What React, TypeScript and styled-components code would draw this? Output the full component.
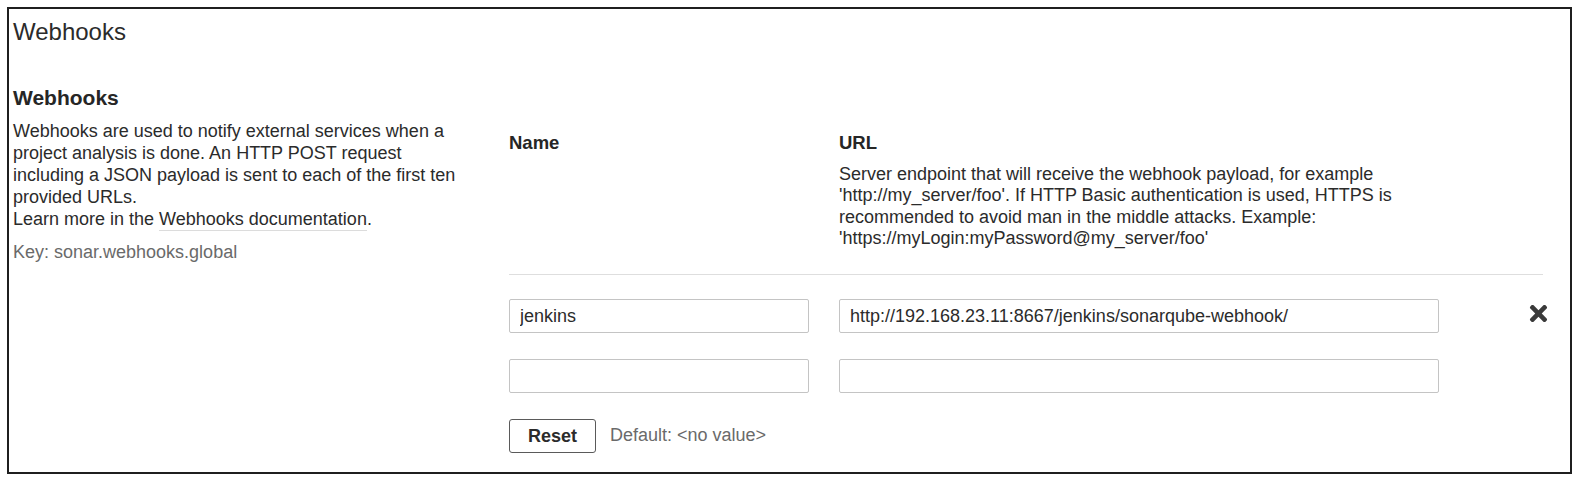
import React from "react";
import styled, { createGlobalStyle } from "styled-components";
import { FaTimes } from "react-icons/fa";

const GlobalStyle = createGlobalStyle`
  html, body {
    margin: 0;
    padding: 0;
    background: #ffffff;
  }
  body {
    font-family: "Liberation Sans", Arial, Helvetica, sans-serif;
    color: #2b2b2b;
  }
  * { box-sizing: border-box; }
`;

const Frame = styled.div`
  margin: 7px 2px 0 7px;
  height: 467px;
  border: 2px solid #1f1f1f;
  padding: 8px 0 0 4px;
  background: #fff;
`;

const PageTitle = styled.h1`
  margin: 0;
  font-size: 24px;
  line-height: 30px;
  font-weight: 400;
  color: #2b2b2b;
`;

const SectionTitle = styled.h3`
  margin: 38px 0 0;
  font-size: 21px;
  line-height: 26px;
  font-weight: 700;
  color: #262626;
`;

const Definition = styled.div`
  display: flex;
  align-items: flex-start;
`;

const Left = styled.div`
  width: 455px;
  flex: none;
  padding-top: 9px;
  font-size: 18px;
  line-height: 22px;
`;

const Description = styled.div`
  color: #2b2b2b;
`;

const DocLink = styled.a`
  color: #2b2b2b;
  text-decoration: none;
  border-bottom: 1px solid #dcdcdc;
  padding-bottom: 1px;
`;

const Key = styled.div`
  margin-top: 11px;
  color: #6a6a6a;
`;

const Right = styled.div`
  margin-left: 41px;
  padding-top: 21px;
  width: 1038px;
  font-size: 18px;
  line-height: 21.5px;
`;

const Grid = styled.div`
  display: grid;
  grid-template-columns: 300px 600px 1fr;
  column-gap: 30px;
`;

const HeadCell = styled.div`
  padding-bottom: 24.5px;
`;

const HeadLabel = styled.div`
  font-weight: 700;
  font-size: 18.5px;
  color: #262626;
`;

const HeadHelp = styled.div`
  margin-top: 10px;
  color: #2b2b2b;
`;

const Divider = styled.div`
  grid-column: 1 / -1;
  height: 1px;
  margin-right: 4px;
  background: #dedede;
  margin-bottom: 24px;
`;

const Field = styled.input<{ $last?: boolean }>`
  display: block;
  width: 100%;
  height: 34px;
  margin-bottom: ${(p) => (p.$last ? "0" : "26px")};
  padding: 0 10px;
  border: 1px solid #c4c4c4;
  border-radius: 2px;
  font-family: "Liberation Sans", Arial, sans-serif;
  font-size: 18px;
  color: #2b2b2b;
  background: #fff;
  outline: none;
`;

const ActionCell = styled.div`
  display: flex;
  justify-content: flex-end;
  height: 34px;
  align-items: center;
`;

const DeleteButton = styled.button`
  display: flex;
  align-items: center;
  justify-content: center;
  width: 17px;
  height: 17px;
  margin-top: -5px;
  padding: 0;
  border: none;
  background: none;
  color: #3a3a3a;
  cursor: pointer;
  svg {
    width: 25px;
    height: 25px;
    flex: none;
  }
`;

const Footer = styled.div`
  display: flex;
  align-items: center;
  gap: 14px;
  margin-top: 26px;
`;

const ResetButton = styled.button`
  width: 87px;
  height: 34px;
  border: 1px solid #5a5a5a;
  border-radius: 3px;
  background: #fff;
  font-family: "Liberation Sans", Arial, sans-serif;
  font-size: 18px;
  font-weight: 700;
  color: #2b2b2b;
  padding: 0;
  cursor: pointer;
`;

const DefaultText = styled.span`
  color: #6a6a6a;
  font-size: 18px;
`;

type Hook = { name: string; url: string };

const hooks: Hook[] = [
  { name: "jenkins", url: "http://192.168.23.11:8667/jenkins/sonarqube-webhook/" },
  { name: "", url: "" },
];

export default function App() {
  return (
    <>
      <GlobalStyle />
      <Frame>
        <PageTitle>Webhooks</PageTitle>
        <SectionTitle>Webhooks</SectionTitle>
        <Definition>
          <Left>
            <Description>
              Webhooks are used to notify external services when a project analysis is done. An HTTP POST
              request including a JSON payload is sent to each of the first ten provided URLs.
              <br />
              Learn more in the <DocLink href="#">Webhooks documentation</DocLink>.
            </Description>
            <Key>Key: sonar.webhooks.global</Key>
          </Left>
          <Right>
            <Grid>
              <HeadCell>
                <HeadLabel>Name</HeadLabel>
              </HeadCell>
              <HeadCell>
                <HeadLabel>URL</HeadLabel>
                <HeadHelp>
                  Server endpoint that will receive the webhook payload, for example
                  'http://my_server/foo'. If HTTP Basic authentication is used, HTTPS is recommended to
                  avoid man in the middle attacks. Example: 'https://myLogin:myPassword@my_server/foo'
                </HeadHelp>
              </HeadCell>
              <HeadCell />
              <Divider />
              {hooks.map((h, i) => (
                <React.Fragment key={i}>
                  <Field defaultValue={h.name} $last={i === hooks.length - 1} />
                  <Field defaultValue={h.url} $last={i === hooks.length - 1} />
                  <ActionCell>
                    {h.name ? (
                      <DeleteButton aria-label="Delete">
                        <FaTimes />
                      </DeleteButton>
                    ) : null}
                  </ActionCell>
                </React.Fragment>
              ))}
            </Grid>
            <Footer>
              <ResetButton>Reset</ResetButton>
              <DefaultText>Default: &lt;no value&gt;</DefaultText>
            </Footer>
          </Right>
        </Definition>
      </Frame>
    </>
  );
}
